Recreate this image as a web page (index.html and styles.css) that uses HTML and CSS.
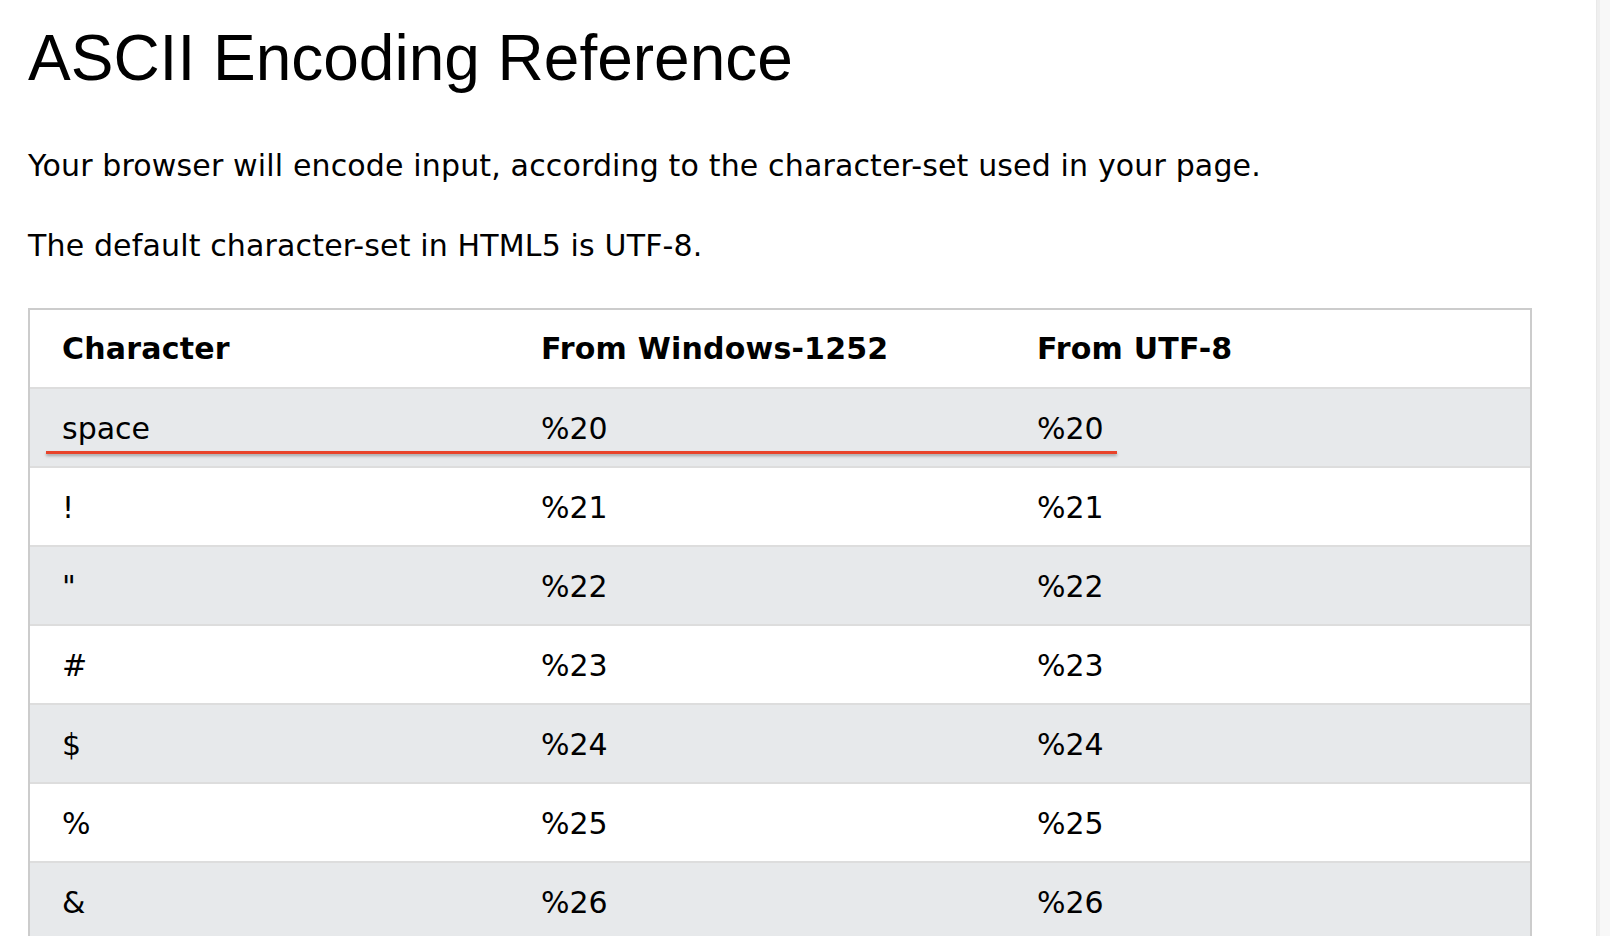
FILE: index.html
```html
<!DOCTYPE html>
<html lang="en">
<head>
<meta charset="utf-8">
<title>ASCII Encoding Reference</title>
<link rel="stylesheet" href="styles.css">
</head>
<body>
<div class="window">
  <main class="page">
    <h1 class="title">ASCII Encoding Reference</h1>
    <p class="intro">Your browser will encode input, according to the character-set used in your page.</p>
    <p class="intro last">The default character-set in HTML5 is UTF-8.</p>
    <div class="table-wrap">
      <table class="ref-table">
        <colgroup>
          <col class="c1">
          <col class="c2">
          <col class="c3">
        </colgroup>
        <thead>
          <tr><th>Character</th><th>From Windows-1252</th><th>From UTF-8</th></tr>
        </thead>
        <tbody>
          <tr><td>space</td><td>%20</td><td>%20</td></tr>
          <tr><td>!</td><td>%21</td><td>%21</td></tr>
          <tr><td>"</td><td>%22</td><td>%22</td></tr>
          <tr><td>#</td><td>%23</td><td>%23</td></tr>
          <tr><td>$</td><td>%24</td><td>%24</td></tr>
          <tr><td>%</td><td>%25</td><td>%25</td></tr>
          <tr><td>&amp;</td><td>%26</td><td>%26</td></tr>
        </tbody>
      </table>
      <div class="mark-line"></div>
    </div>
  </main>
  <div class="scrollbar"></div>
</div>
</body>
</html>
```

FILE: styles.css
```css
html, body {
  margin: 0;
  padding: 0;
  height: 100%;
  overflow: hidden;
  background: #fff;
}

body {
  font-family: "DejaVu Sans", Verdana, sans-serif;
  color: #000;
}

.window {
  display: flex;
  height: 100%;
}

.page {
  flex: 1;
  padding-left: 28px;
  min-width: 0;
}

.scrollbar {
  width: 13px;
  flex: 0 0 13px;
  height: 100%;
  border-left: 1px solid #e9e9e9;
  background: #f8f8f8;
  box-shadow: inset 3px 0 0 #efefef;
}

.title {
  font-family: "Liberation Sans", Arial, Helvetica, sans-serif;
  font-weight: normal;
  font-size: 64px;
  line-height: 74px;
  margin: 21px 0 48px 0;
}

.intro {
  font-size: 30px;
  line-height: 45px;
  letter-spacing: 0.15px;
  margin: 0 0 35px 0;
}

.intro.last {
  margin-bottom: 40px;
}

.table-wrap {
  position: relative;
  width: 1504px;
}

.ref-table {
  width: 1504px;
  table-layout: fixed;
  border-collapse: separate;
  border-spacing: 0;
  border: 2px solid #cccccc;
  font-size: 30px;
  line-height: 45px;
}

.c1 { width: 479px; }
.c2 { width: 496px; }

.ref-table th,
.ref-table td {
  padding: 16px 16px 16px 32px;
  text-align: left;
  vertical-align: top;
  border-bottom: 2px solid #dddddd;
}

.ref-table td {
  padding-top: 17px;
  padding-bottom: 15px;
}

.ref-table th {
  font-weight: bold;
  letter-spacing: 0.2px;
}

.ref-table tbody tr:nth-child(odd) {
  background: #e7e9eb;
}

.mark-line {
  position: absolute;
  left: 18px;
  top: 143px;
  width: 1071px;
  height: 3px;
  background: #e8432a;
  box-shadow: 0 2px 3px rgba(0, 0, 0, 0.3);
}
```
